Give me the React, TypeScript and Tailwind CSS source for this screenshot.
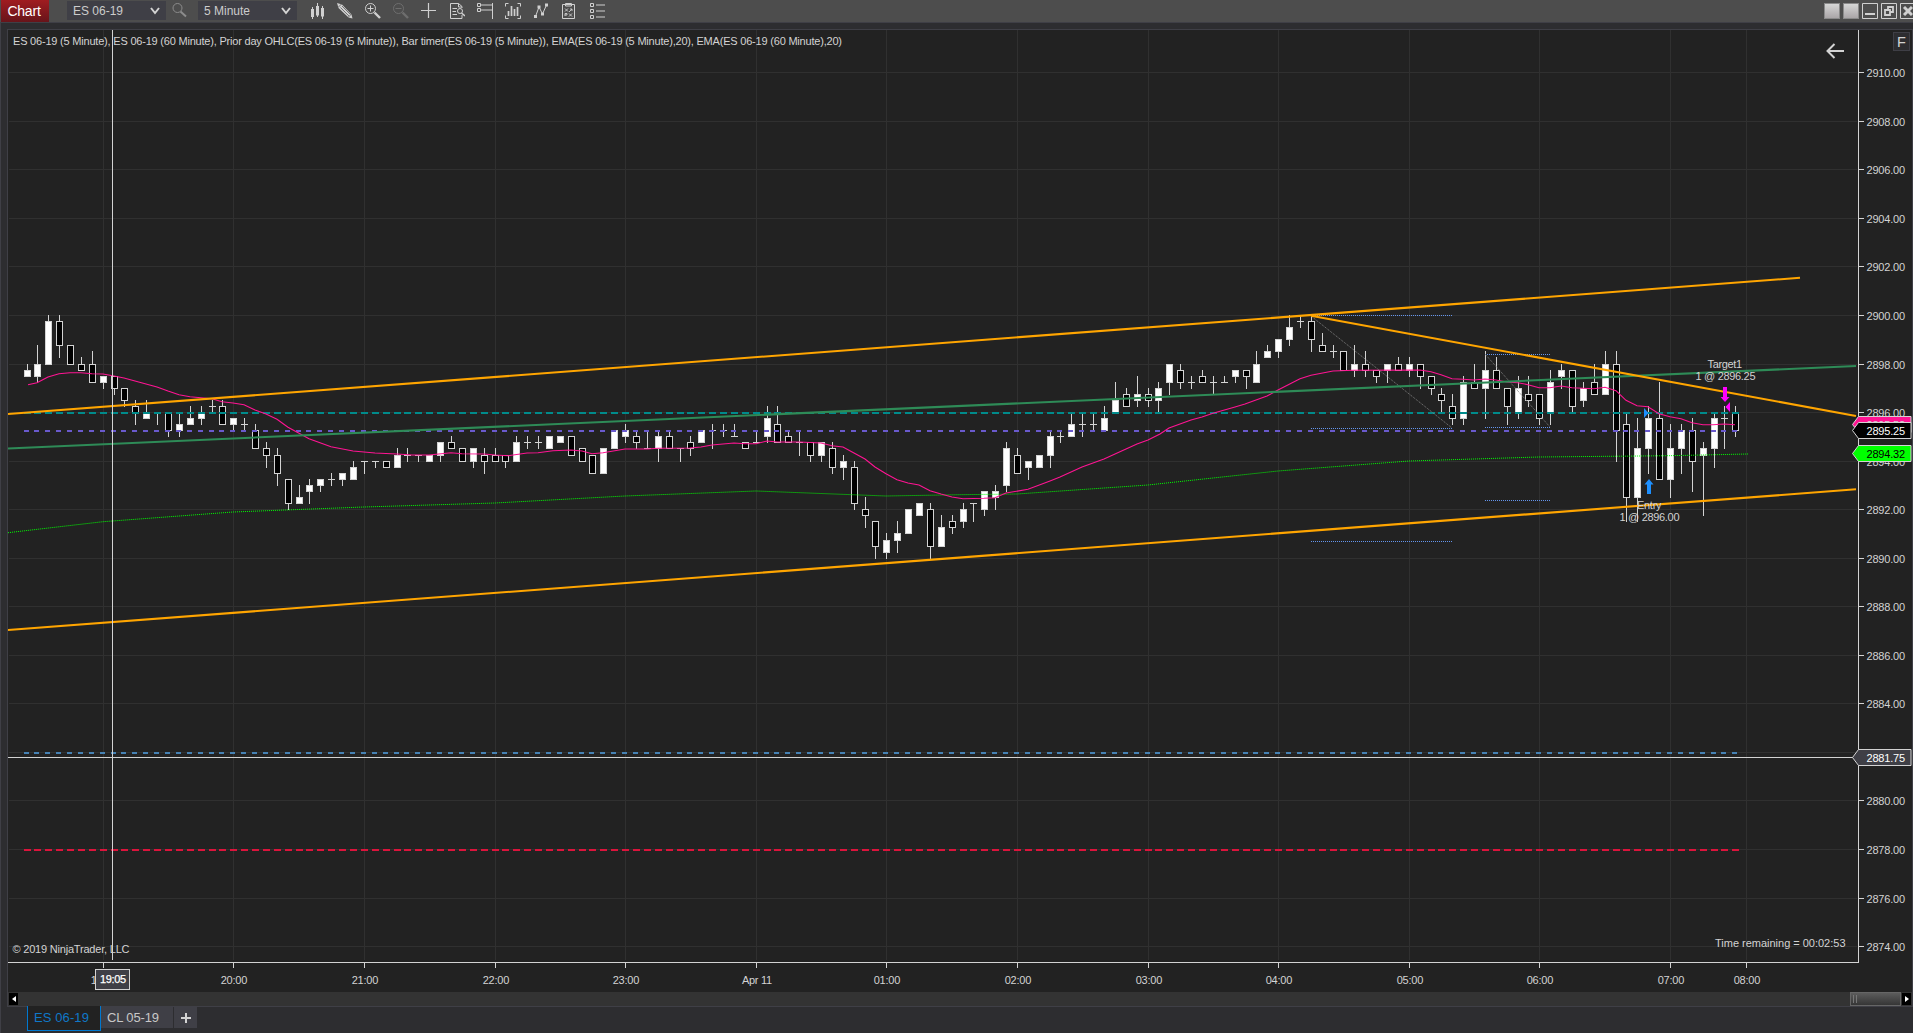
import type { ReactNode } from 'react';

// [high, open, close, low] in ticks above 2890.00 (one tick = 0.25)
const BARS: number[][] = [
  [32, 30, 31, 30], [35, 30, 32, 29], [40, 32, 39, 32], [40, 39, 35, 33],
  [35, 35, 32, 32], [33, 32, 31, 31], [34, 32, 29, 29], [30, 29, 30, 28],
  [30, 30, 28, 27], [28, 28, 26, 25], [26, 25, 24, 22], [26, 23, 24, 23],
  [24, 24, 24, 22], [24, 24, 21, 20], [24, 21, 22, 20], [25, 22, 23, 22],
  [25, 23, 24, 22], [26, 25, 25, 24], [26, 25, 22, 22], [23, 22, 23, 21],
  [23, 22, 22, 21], [22, 21, 18, 18], [19, 18, 17, 15], [18, 17, 14, 12],
  [13, 13, 9, 8], [12, 9, 10, 9], [13, 11, 12, 9], [13, 12, 13, 11],
  [14, 13, 13, 12], [14, 13, 14, 12], [16, 13, 15, 13], [16, 16, 16, 14],
  [16, 16, 16, 15], [16, 16, 15, 15], [18, 15, 17, 15], [18, 17, 17, 16],
  [17, 17, 17, 16], [17, 16, 17, 16], [19, 17, 19, 16], [20, 19, 18, 18],
  [18, 18, 16, 16], [18, 16, 18, 15], [18, 17, 16, 14], [18, 17, 16, 16],
  [17, 17, 16, 15], [20, 16, 19, 16], [20, 19, 19, 18], [20, 19, 19, 18],
  [20, 18, 20, 18], [20, 19, 20, 19], [20, 20, 17, 17], [18, 18, 16, 16],
  [17, 17, 14, 14], [18, 14, 18, 14], [21, 18, 21, 18], [22, 20, 21, 19],
  [21, 20, 19, 18], [21, 18, 18, 18], [21, 18, 20, 16], [21, 20, 18, 18],
  [18, 18, 18, 16], [20, 19, 18, 17], [21, 19, 21, 19], [22, 21, 21, 18],
  [22, 21, 21, 20], [22, 20, 20, 20], [19, 19, 18, 18], [21, 19, 19, 19],
  [25, 20, 23, 19], [25, 22, 19, 19], [21, 20, 19, 19], [21, 19, 19, 17],
  [19, 19, 17, 16], [19, 17, 19, 16], [19, 18, 15, 14], [17, 15, 16, 13],
  [16, 15, 9, 8], [10, 8, 7, 5], [6, 6, 2, 0], [4, 1, 3, 0],
  [6, 3, 4, 1], [8, 4, 8, 4], [9, 7, 9, 7], [9, 8, 2, 0],
  [7, 2, 5, 2], [7, 6, 5, 4], [9, 6, 8, 5], [9, 9, 9, 6],
  [11, 8, 11, 7], [12, 10, 11, 8], [19, 12, 18, 11], [18, 17, 14, 14],
  [16, 15, 16, 13], [17, 15, 17, 15], [21, 17, 20, 15], [21, 20, 20, 19],
  [24, 20, 22, 20], [24, 22, 22, 20], [24, 22, 22, 21], [25, 21, 23, 21],
  [29, 24, 26, 24], [28, 27, 25, 25], [30, 26, 27, 25], [28, 27, 26, 25],
  [29, 26, 28, 24], [32, 29, 32, 27], [32, 31, 29, 28], [30, 29, 29, 28],
  [31, 30, 29, 29], [30, 29, 29, 27], [30, 29, 29, 29], [31, 30, 31, 29],
  [31, 31, 30, 28], [34, 29, 32, 29], [35, 33, 34, 33], [36, 34, 36, 33],
  [40, 36, 38, 35], [40, 39, 39, 38], [40, 39, 36, 34], [37, 35, 34, 34],
  [35, 34, 34, 33], [34, 34, 31, 31], [35, 31, 32, 30], [34, 32, 31, 30],
  [31, 31, 30, 29], [32, 31, 32, 29], [33, 32, 31, 31], [33, 31, 32, 30],
  [32, 32, 30, 28], [30, 30, 28, 27], [28, 27, 26, 24], [27, 25, 23, 22],
  [30, 23, 29, 22], [32, 29, 28, 28], [34, 28, 31, 23], [33, 31, 28, 28],
  [28, 28, 25, 22], [30, 24, 28, 23], [30, 27, 26, 25], [27, 27, 23, 22],
  [31, 24, 29, 22], [32, 30, 31, 28], [31, 31, 25, 24], [29, 26, 28, 25],
  [32, 29, 27, 27], [34, 27, 32, 27], [34, 32, 21, 16], [24, 22, 10, 6],
  [23, 10, 18, 6], [25, 18, 23, 14], [29, 23, 13, 13], [22, 13, 18, 10],
  [22, 18, 21, 14], [23, 21, 16, 11], [19, 17, 18, 7], [24, 18, 23, 15],
  [25, 23, 23, 18], [25, 24, 21, 20],
];

const HOURS: [number, string][] = [
  [103, '19:00'], [233, '20:00'], [364, '21:00'], [495, '22:00'], [625, '23:00'],
  [756, 'Apr 11'], [886, '01:00'], [1017, '02:00'], [1148, '03:00'], [1278, '04:00'],
  [1409, '05:00'], [1539, '06:00'], [1670, '07:00'], [1746, '08:00'],
];

const PRICES = Array.from({ length: 19 }, (_, i) => 2910 - i * 2);

const EMA20 =
  '28,384.7 37,382.7 48,377 59,373.7 70,372.7 81,372.7 92,373.7 103,374 114,376 124,378 135,381 146,384 157,387 168,391 179,394.7 190,396.7 201,397.7 212,398.7 222,401.7 233,403 244,404.7 255,410 266,414 277,419.3 288,427.3 299,433.3 309,438.7 320,442.7 331,446.7 353,451 375,453 397,454 412,455 429,455 451,452.7 462,453.7 484,454 495,455 508,455.7 527,453 538,452.7 553,450.7 571,450 582,451 592,453.7 603,452.7 625,449 647,449 658,448.3 690,448 701,447 712,445 734,443 745,443.7 756,443.7 767,441 777,442 799,442 821,443 832,445.7 843,447 854,453 865,459 875,467 886,473.7 897,479.7 908,483 919,485 930,490.7 941,494 952,497 963,498.7 984,498.3 995,497.7 1006,493 1028,489.3 1050,481 1060,477 1082,467 1104,459 1126,449 1137,444 1148,440 1160,434 1169,428 1191,420 1202,417 1213,413.3 1235,407 1245,404 1267,396 1278,390 1300,378.7 1311,375.3 1333,371 1354,370.3 1420,370 1431,371.7 1441,374.7 1452,378.7 1463,379.3 1474,380 1485,379 1496,380 1507,382 1518,382.7 1528,384.7 1539,387.7 1550,387.7 1561,386 1572,387.7 1594,388.7 1605,387.3 1616,390.7 1626,400.3 1637,405.7 1648,406.7 1659,413.7 1670,416.7 1681,418.7 1692,422.7 1703,424.7 1713,424.7 1724,424 1735,424.7';

const EMA60 =
  '8,532.7 103,521.7 233,512 364,507 495,503 625,496 756,491 886,496 960,494.7 1017,494 1148,485 1278,471 1409,461 1539,457 1670,455.7 1748,454';

const priceY = (p: number) => Math.round(72.25 + (2910 - p) * 24.273);
const tickY = (t: number) => priceY(2890 + t / 4);
const barX = (i: number) => Math.floor(27 + i * 10.884);

const LINE = '#d3d3d3';

function Candle({ bar, i }: { bar: number[]; i: number }) {
  const [high, open, close, low] = bar;
  const x = barX(i);
  const top = tickY(Math.max(open, close));
  const bottom = tickY(Math.min(open, close));
  const yh = tickY(high);
  const yl = tickY(low);
  return (
    <g>
      <rect x={x} y={yh} width={1} height={yl - yh + 1} fill={LINE} />
      {open === close ? (
        <rect x={x - 3} y={top} width={7} height={1} fill={LINE} />
      ) : (
        <rect
          x={x - 2.5}
          y={top + 0.5}
          width={6}
          height={bottom - top}
          fill={close > open ? '#fff' : '#000'}
          stroke={LINE}
        />
      )}
    </g>
  );
}

function DashRow({ price, color, width }: { price: number; color: string; width: number }) {
  return (
    <g fill={color}>
      {BARS.map((_, i) => (
        <rect key={i} x={barX(i) - 3} y={priceY(price)} width={width} height={2} />
      ))}
    </g>
  );
}

interface PriceTagProps {
  y: number;
  fill: string;
  color: string;
  label: string;
}

function PriceTag({ y, fill, color, label }: PriceTagProps) {
  return (
    <g>
      <path
        d={`M1852.5 ${y}L1858.5 ${y - 8}H1911V${y + 8}H1858.5Z`}
        fill={fill}
        stroke={LINE}
        strokeWidth={1}
      />
      <text x={1866.5} y={y + 4} fill={color} textLength={38.5}>
        {label}
      </text>
    </g>
  );
}

function Chart() {
  return (
    <svg
      viewBox="8 30 1904 962"
      className="block h-[962px] w-[1904px] font-['Liberation_Sans',Arial,sans-serif] text-[11px]"
    >
      {/* Grid */}
      <g fill="#303030">
        {HOURS.map(([x]) => (
          <rect key={x} x={x} y={30} width={1} height={930} />
        ))}
        {PRICES.map((p) => (
          <rect key={p} x={9} y={priceY(p)} width={1848} height={1} />
        ))}
      </g>

      {/* Candles */}
      {BARS.map((bar, i) => (
        <Candle key={i} bar={bar} i={i} />
      ))}

      {/* Prior day OHLC */}
      <DashRow price={2896} color="#008b8b" width={7} />
      <DashRow price={2895.25} color="#6a5acd" width={5} />
      <DashRow price={2882} color="#4682b4" width={5} />
      <DashRow price={2878} color="#dc143c" width={7} />

      {/* Moving averages */}
      <polyline points={EMA60} fill="none" stroke="#00ff00" strokeDasharray="1 1" strokeWidth={1} />
      <polyline points={EMA20} fill="none" stroke="#ff1493" strokeWidth={1.1} />

      {/* Measured moves */}
      <g stroke="#6495ed" strokeDasharray="1 1">
        <path d="M1311 315.5H1452M1311 428.5H1452M1311 541.5H1452" />
        <path d="M1485 354.5H1550M1485 427.5H1550M1485 500.5H1550" />
      </g>
      <path d="M1311 316L1452 428M1485 354L1550 427" stroke="#808080" strokeDasharray="1 1" />

      {/* Trend lines */}
      <path d="M8 448.5L1856 366" stroke="#2e8b57" strokeWidth={2.1} />
      <g stroke="#ffa500" strokeWidth={2.1}>
        <path d="M8 414L1800 277.8" />
        <path d="M8 630L1856 489.3" />
        <path d="M1311 315.7L1856 416" />
      </g>

      {/* Executions */}
      <path d="M1644 408L1648.5 413L1644 418Z" fill="#1e90ff" />
      <path d="M1649 479L1653.5 484.5H1651V494H1647V484.5H1644.5Z" fill="#1e90ff" />
      <path d="M1723 387H1727V397H1729.5L1725 402L1720.5 397H1723Z" fill="#ff00ff" />
      <path d="M1730 402V412L1725.5 407Z" fill="#ff00ff" />
      <g fill={LINE}>
        <text x={1707.5} y={368} textLength={34.5}>Target1</text>
        <text x={1695.5} y={380} textLength={60}>1 @ 2896.25</text>
        <text x={1637} y={509} textLength={24.5}>Entry</text>
        <text x={1619.5} y={521} textLength={60}>1 @ 2896.00</text>
      </g>

      {/* Axes */}
      <g fill={LINE}>
        <rect x={8} y={962} width={1851} height={1} />
        <rect x={1858} y={30} width={1} height={933} />
        {HOURS.map(([x, label]) => (
          <g key={x}>
            <rect x={x} y={963} width={1} height={5} />
            <text x={x + 1} y={984} textAnchor="middle" textLength={label === 'Apr 11' ? 30 : 26.5}>
              {label}
            </text>
          </g>
        ))}
        {PRICES.map((p) => (
          <g key={p}>
            <rect x={1859} y={priceY(p)} width={5} height={1} />
            {p !== 2882 && (
              <text x={1866.5} y={priceY(p) + 4.7} textLength={38.5}>
                {p.toFixed(2)}
              </text>
            )}
          </g>
        ))}
      </g>

      <g fill={LINE}>
        <text x={13} y={45} textLength={829}>
          ES 06-19 (5 Minute), ES 06-19 (60 Minute), Prior day OHLC(ES 06-19 (5 Minute)), Bar timer(ES 06-19 (5 Minute)), EMA(ES 06-19 (5 Minute),20), EMA(ES 06-19 (60 Minute),20)
        </text>
        <text x={12.5} y={953} textLength={117}>© 2019 NinjaTrader, LLC</text>
        <text x={1715} y={947} textLength={130.5}>Time remaining = 00:02:53</text>
      </g>

      {/* Crosshair */}
      <rect x={112} y={30} width={1} height={930} fill={LINE} />
      <rect x={8} y={757} width={1845} height={1} fill={LINE} />
      <rect x={95.5} y={969.5} width={34} height={20} fill="#3f3f46" stroke={LINE} />
      <text x={100} y={983} fill="#fff" stroke="#fff" strokeWidth={0.25} textLength={26}>19:05</text>

      {/* Price markers */}
      <PriceTag y={424.5} fill="#ff1493" color={LINE} label="2895.52" />
      <PriceTag y={430.5} fill="#000" color="#fff" label="2895.25" />
      <PriceTag y={453.5} fill="#00ff00" color="#000" label="2894.32" />
      <PriceTag y={757.5} fill="#3f3f46" color="#fff" label="2881.75" />

      {/* Back arrow and fixed-scale button */}
      <path d="M1844 51H1828M1834.5 44L1827.5 51L1834.5 58" fill="none" stroke={LINE} strokeWidth={2} />
      <rect x={1893.5} y={32.5} width={16} height={18} fill="#2d2d30" stroke="#3f3f46" />
      <text x={1897} y={47} fill={LINE} fontSize={14.5}>F</text>
    </svg>
  );
}

function Icon({ children, dim }: { children: ReactNode; dim?: boolean }) {
  return (
    <svg
      viewBox="0 0 16 16"
      className={dim ? 'h-4 w-4 shrink-0 text-[#6e6e6e]' : 'h-4 w-4 shrink-0 text-[#d0d0d0]'}
      fill="none"
      stroke="currentColor"
    >
      {children}
    </svg>
  );
}

function Combo({ label, className }: { label: string; className: string }) {
  return (
    <div className={`flex h-[19px] items-center justify-between bg-[#3f3f46] pl-1.5 pr-1.5 text-[#ccc] ${className}`}>
      <span className="whitespace-nowrap text-[12px] leading-none">{label}</span>
      <svg viewBox="0 0 10 8" className="h-2 w-2.5" fill="none" stroke="#d3d3d3" strokeWidth={2}>
        <path d="M1 1L5 6L9 1" />
      </svg>
    </div>
  );
}

function Toolbar() {
  return (
    <div className="flex h-[22px] items-start bg-[#4d4d4d] pl-px">
      <div className="flex h-[22px] w-12 items-center justify-center bg-linear-to-b from-[#a01c20] to-[#68141a] pr-0.5 text-[14px] tracking-[-0.2px] text-white">
        Chart
      </div>
      <Combo label="ES 06-19" className="ml-[18px] mt-px w-[99px]" />
      <div className="ml-[6px] mt-[3px] text-[#8c8c8c]">
        <svg viewBox="0 0 16 16" className="h-4 w-4" fill="none" stroke="currentColor">
          <circle cx={5.5} cy={5} r={4.5} />
          <path d="M8.5 8.5L14 13.5" strokeWidth={2} />
        </svg>
      </div>
      <Combo label="5 Minute" className="ml-[10px] mt-px w-[99px]" />
      <div className="ml-[12px] mt-[3px] flex gap-3">
        <Icon>
          <path d="M3.500 4V16M8.500 0V14M13.500 3V16" />
          <path d="M3.500 6V14M8.500 3V12.500M13.500 5V13.500" strokeWidth={3} />
        </Icon>
        <Icon>
          <path d="M0 0L5 1.500L14.500 11.500L15.500 15.500L11.500 14.500L1.500 5Z" fill="currentColor" stroke="none" />
          <path d="M1 4.500L4.500 1M3.500 4.500L12 13M5 3L13.500 11.500M11 14.500L14.500 11" stroke="#4d4d4d" strokeWidth={0.7} />
        </Icon>
        <Icon>
          <circle cx={5.5} cy={5.5} r={5} />
          <path d="M5.500 2.500V8.500M2.500 5.500H8.500" />
          <path d="M9.500 9.500L15 15" strokeWidth={2.4} />
        </Icon>
        <Icon dim>
          <circle cx={5.5} cy={5.5} r={5} />
          <path d="M2.500 5.500H8.500" />
          <path d="M9.500 9.500L15 15" strokeWidth={2.4} />
        </Icon>
        <Icon>
          <path d="M7.500 0V15M0 7.500H15" strokeWidth={1.2} />
        </Icon>
        <Icon>
          <path d="M13 5V3.500L9.500 0.500H1.500V15.500H13V12M9.500 0.500V4H13M3.500 5.500H8M3.500 8.500H7M3.500 11.500H8" />
          <circle cx={11} cy={8} r={2.5} />
          <path d="M12.500 10L16 13" strokeWidth={1.5} />
        </Icon>
        <Icon>
          <path d="M0.500 0.500H3.500V3.500H0.500ZM0.500 5.500H3.500V8.500H0.500ZM3.500 2H16M3.500 7H16M15.500 0V16" />
        </Icon>
        <Icon>
          <path d="M3.500 0.500H0.500V3.500M12.500 0.500H15.500V3.500M0.500 12.500V15.500H3.500M15.500 12.500V15.500H12.500" />
          <path d="M3.500 8V13M6.500 3V13M9.500 6V13M12.500 4V13" strokeWidth={1.7} />
        </Icon>
        <Icon>
          <path d="M2.500 13.500L6 4L9.500 11L13.500 2" />
          <path d="M1 12H4V15H1ZM4.500 2.500H7.500V5.500H4.500ZM8 9.500H11V12.500H8ZM12 0.500H15V3.500H12Z" fill="currentColor" stroke="none" />
        </Icon>
        <Icon>
          <path d="M1.500 1.500H13.500V15.500H1.500ZM4.500 0.500H10.500V3H4.500Z" />
          <path d="M4 5.500L7 8.500M7 5.500L4 8.500M8 9L11 6M11 8V6H9M4 13V10.500H6V12H4M8 10.500L11 13.500M11 10.500L8 13.500" strokeWidth={0.9} />
        </Icon>
        <Icon>
          <path d="M1.500 0.500H4.500V3.500H1.500ZM1.500 6.500H4.500V9.500H1.500ZM1.500 12.500H4.500V15.500H1.500ZM7 2H16M7 8H16M7 14H16" />
        </Icon>
      </div>

      {/* Window buttons */}
      <div className="ml-auto mt-[3px] flex gap-[3px]">
        <div className="h-4 w-4 border border-[#8a8a8a] bg-linear-to-b from-[#d6d6d6] to-[#aaa6a8]" />
        <div className="h-4 w-4 border border-[#8a8a8a] bg-linear-to-b from-[#d6d6d6] to-[#aaa6a8]" />
        <Icon>
          <path d="M0.500 0.500H15.500V15.500H0.500Z" />
          <path d="M3 11H13" strokeWidth={2} />
        </Icon>
        <Icon>
          <path d="M0.500 0.500H15.500V15.500H0.500Z" />
          <path d="M4 7H9V12H4ZM7 7V4H12V9H9" strokeWidth={1.8} />
        </Icon>
        <div className="w-[13px] overflow-hidden">
          <Icon>
            <path d="M0.500 0.500H15.500V15.500H0.500Z" />
            <path d="M4 4L12 12M12 4L4 12" strokeWidth={3} />
          </Icon>
        </div>
      </div>
    </div>
  );
}

function ScrollBar() {
  return (
    <div className="flex h-3.5 items-center bg-[#333333]">
      <div className="ml-px flex h-3 w-[9px] items-center justify-center bg-black">
        <svg viewBox="0 0 4 6" className="h-1.5 w-1" fill="#fff"><path d="M4 0V6L0 3Z" /></svg>
      </div>
      <div className="ml-auto flex h-3.5 w-[51px] items-center gap-0.5 border border-[#666] bg-linear-to-b from-[#5c5c5c] to-[#363636] pl-0.5">
        <div className="h-2 w-px bg-[#777]" />
        <div className="h-2 w-px bg-[#777]" />
      </div>
      <div className="ml-px mr-px flex h-3 w-[9px] items-center justify-center bg-black">
        <svg viewBox="0 0 4 6" className="h-1.5 w-1" fill="#fff"><path d="M0 0V6L4 3Z" /></svg>
      </div>
    </div>
  );
}

function Tabs() {
  return (
    <div className="-mt-px flex h-[27px] items-start pl-5 text-[13px] leading-none">
      <div className="flex h-[25px] w-[74px] items-center border border-t-0 border-[#0078d0] bg-[#222] pl-1.5 pb-0.5 tracking-[0.1px] text-[#0f78c8]">
        ES 06-19
      </div>
      <div className="mt-px flex h-[21px] w-[72px] items-center bg-[#3f3f46] pl-1.5 pb-px tracking-[-0.15px] text-[#c8c8c8]">
        CL 05-19
      </div>
      <div className="ml-px mt-px flex h-[21px] w-[23px] items-center justify-center bg-[#3f3f46]">
        <svg viewBox="0 0 10 10" className="h-2.5 w-2.5" stroke="#d3d3d3" strokeWidth={2}>
          <path d="M5 0V10M0 5H10" />
        </svg>
      </div>
    </div>
  );
}

export default function App() {
  return (
    <div className="flex h-[1033px] w-[1913px] flex-col overflow-hidden bg-[#2d2d30] font-['Liberation_Sans',Arial,sans-serif]">
      <Toolbar />
      <div className="h-px shrink-0 bg-[#3f3f46]" />
      <div className="flex grow flex-col border-l border-[#3f3f46] pl-1.5 pt-1.5">
        <div className="w-[1906px] border border-[#3f3f46] bg-[#222222]">
          <Chart />
          <ScrollBar />
        </div>
        <Tabs />
      </div>
    </div>
  );
}
